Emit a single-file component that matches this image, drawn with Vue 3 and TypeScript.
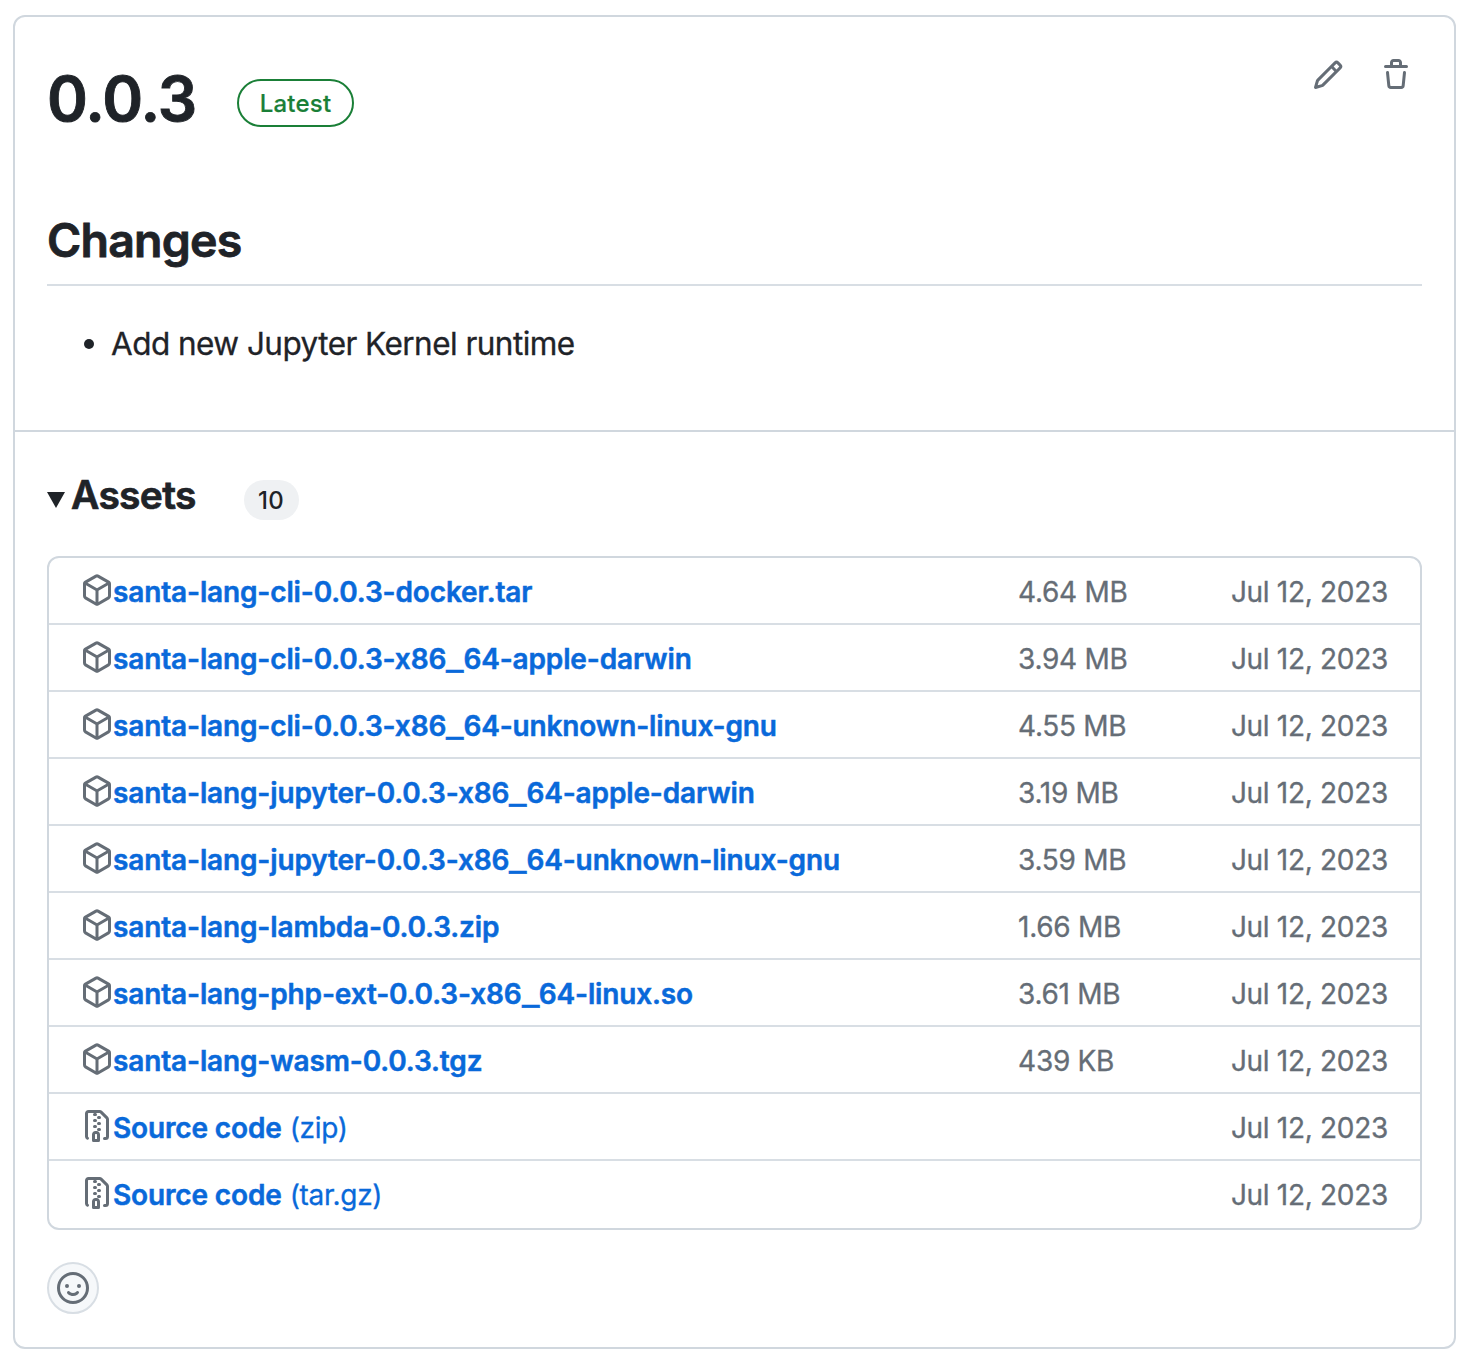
<script setup lang="ts">
interface Asset {
  name: string
  suffix?: string
  size?: string
  kind: 'package' | 'zip'
}

const releaseDate = 'Jul 12, 2023'

const assets: Asset[] = [
  { name: 'santa-lang-cli-0.0.3-docker.tar', size: '4.64 MB', kind: 'package' },
  { name: 'santa-lang-cli-0.0.3-x86_64-apple-darwin', size: '3.94 MB', kind: 'package' },
  { name: 'santa-lang-cli-0.0.3-x86_64-unknown-linux-gnu', size: '4.55 MB', kind: 'package' },
  { name: 'santa-lang-jupyter-0.0.3-x86_64-apple-darwin', size: '3.19 MB', kind: 'package' },
  { name: 'santa-lang-jupyter-0.0.3-x86_64-unknown-linux-gnu', size: '3.59 MB', kind: 'package' },
  { name: 'santa-lang-lambda-0.0.3.zip', size: '1.66 MB', kind: 'package' },
  { name: 'santa-lang-php-ext-0.0.3-x86_64-linux.so', size: '3.61 MB', kind: 'package' },
  { name: 'santa-lang-wasm-0.0.3.tgz', size: '439 KB', kind: 'package' },
  { name: 'Source code', suffix: '(zip)', kind: 'zip' },
  { name: 'Source code', suffix: '(tar.gz)', kind: 'zip' },
]

// Underscores are rendered in their own element so they can be drawn wider.
const nameParts = (name: string): string[] => name.split(/(_)/)

const icons = {
  pencil:
    'M11.013 1.427a1.75 1.75 0 0 1 2.474 0l1.086 1.086a1.75 1.75 0 0 1 0 2.474l-8.61 8.61c-.21.21-.47.364-.756.445l-3.251.93a.75.75 0 0 1-.927-.928l.929-3.25c.081-.286.235-.547.445-.758l8.61-8.61Zm.176 4.823L9.75 4.81l-6.286 6.287a.253.253 0 0 0-.064.108l-.558 1.953 1.953-.558a.253.253 0 0 0 .108-.064Zm1.238-3.763a.25.25 0 0 0-.354 0L10.811 3.75l1.439 1.44 1.263-1.263a.25.25 0 0 0 0-.354Z',
  trash:
    'M11 1.75V3h2.25a.75.75 0 0 1 0 1.5H2.75a.75.75 0 0 1 0-1.5H5V1.75C5 .784 5.784 0 6.75 0h2.5C10.216 0 11 .784 11 1.75ZM4.496 6.675l.66 6.6a.25.25 0 0 0 .249.225h5.19a.25.25 0 0 0 .249-.225l.66-6.6a.75.75 0 0 1 1.492.149l-.66 6.6A1.748 1.748 0 0 1 10.595 15h-5.19a1.75 1.75 0 0 1-1.741-1.575l-.66-6.6a.75.75 0 1 1 1.492-.15ZM6.5 1.75V3h3V1.75a.25.25 0 0 0-.25-.25h-2.5a.25.25 0 0 0-.25.25Z',
  package:
    'm8.878.392 5.25 3.045c.54.314.872.89.872 1.514v6.098a1.75 1.75 0 0 1-.872 1.514l-5.25 3.045a1.75 1.75 0 0 1-1.756 0l-5.25-3.045A1.75 1.75 0 0 1 1 11.049V4.951c0-.624.332-1.201.872-1.514L7.122.392a1.75 1.75 0 0 1 1.756 0ZM7.875 1.69l-4.63 2.685L8 7.133l4.755-2.758-4.63-2.685a.248.248 0 0 0-.25 0ZM2.5 5.677v5.372c0 .09.047.171.125.216l4.625 2.683V8.432Zm6.25 8.271 4.625-2.683a.25.25 0 0 0 .125-.216V5.677L8.75 8.432Z',
  zip: 'M3.5 1.75v11.5c0 .09.048.173.126.217a.75.75 0 0 1-.752 1.298A1.748 1.748 0 0 1 2 13.25V1.75C2 .784 2.784 0 3.75 0h5.586c.464 0 .909.185 1.237.513l2.914 2.914c.329.328.513.773.513 1.237v8.586A1.75 1.75 0 0 1 12.25 15h-.5a.75.75 0 0 1 0-1.5h.5a.25.25 0 0 0 .25-.25V4.664a.25.25 0 0 0-.073-.177L9.513 1.573a.25.25 0 0 0-.177-.073H7.25a.75.75 0 0 1 0 1.5h-.5a.75.75 0 0 1 0-1.5h-3a.25.25 0 0 0-.25.25Zm3.75 8.75h.5c.966 0 1.75.784 1.75 1.75v3a.75.75 0 0 1-.75.75h-2.5a.75.75 0 0 1-.75-.75v-3c0-.966.784-1.75 1.75-1.75ZM6 5.25a.75.75 0 0 1 .75-.75h.5a.75.75 0 0 1 0 1.5h-.5A.75.75 0 0 1 6 5.25Zm.75 2.25h.5a.75.75 0 0 1 0 1.5h-.5a.75.75 0 0 1 0-1.5ZM8 6.75A.75.75 0 0 1 8.75 6h.5a.75.75 0 0 1 0 1.5h-.5A.75.75 0 0 1 8 6.75ZM8.75 3h.5a.75.75 0 0 1 0 1.5h-.5a.75.75 0 0 1 0-1.5ZM8 9.75A.75.75 0 0 1 8.75 9h.5a.75.75 0 0 1 0 1.5h-.5A.75.75 0 0 1 8 9.75Zm-1 2.5v2.25h1v-2.25a.25.25 0 0 0-.25-.25h-.5a.25.25 0 0 0-.25.25Z',
  smiley:
    'M8 0a8 8 0 1 1 0 16A8 8 0 0 1 8 0ZM1.5 8a6.5 6.5 0 1 0 13 0 6.5 6.5 0 0 0-13 0Zm3.82 1.636a.75.75 0 0 1 1.038.175l.007.009c.103.118.22.222.35.31.264.178.683.37 1.285.37.602 0 1.02-.192 1.285-.371.13-.088.247-.192.35-.31l.007-.008a.75.75 0 0 1 1.222.87c-.06.085-.126.165-.198.24-.16.166-.338.316-.53.445-.63.418-1.37.638-2.127.629-.946 0-1.652-.308-2.126-.63a3.331 3.331 0 0 1-.728-.675.75.75 0 0 1 .183-1.044ZM12 7a1 1 0 1 1-2 0 1 1 0 0 1 2 0ZM5 8a1 1 0 1 1 0-2 1 1 0 0 1 0 2Z',
}
</script>

<template>
  <main class="page">
    <article class="card">
      <section class="notes">
        <header class="head">
          <h1 class="title">0.0.3</h1>
          <span class="badge">Latest</span>
          <div class="actions">
            <svg class="icon" viewBox="0 0 16 16"><path :d="icons.pencil" /></svg>
            <svg class="icon" viewBox="0 0 16 16"><path :d="icons.trash" /></svg>
          </div>
        </header>
        <h2 class="changes">Changes</h2>
        <ul class="list">
          <li class="item"><span class="dot"></span><span class="item-text">Add new Jupyter Kernel runtime</span></li>
        </ul>
      </section>

      <section class="assets">
        <div class="summary">
          <span class="caret"></span>
          <h3 class="assets-title">Assets</h3>
          <span class="counter">10</span>
        </div>
        <ul class="table">
          <li v-for="(asset, i) in assets" :key="i" class="row">
            <svg class="icon" viewBox="0 0 16 16"><path :d="icons[asset.kind]" /></svg>
            <a class="link">
              <span class="name"><span v-for="(part, j) in nameParts(asset.name)" :key="j" :class="{ underscore: part === '_' }">{{ part }}</span></span>
              <span v-if="asset.suffix" class="suffix">{{ asset.suffix }}</span>
            </a>
            <span class="size">{{ asset.size }}</span>
            <span class="date">{{ releaseDate }}</span>
          </li>
        </ul>
        <button class="react" type="button" aria-label="Add reaction">
          <svg class="icon" viewBox="0 0 16 16"><path :d="icons.smiley" /></svg>
        </button>
      </section>
    </article>
  </main>
</template>

<style>
body {
  background: #ffffff;
}
</style>

<style scoped>
.page {
  box-sizing: border-box;
  width: 1470px;
  height: 1360px;
  padding: 15px 14px 11px 13px;
  background: #ffffff;
  color: #1f2328;
  font-family: Inter, 'Liberation Sans', sans-serif;
  white-space: nowrap;
  overflow: hidden;
}

.card {
  box-sizing: border-box;
  height: 1334px;
  border: 2px solid #d0d7de;
  border-radius: 12px;
}

.icon {
  display: block;
  flex: none;
  width: 32px;
  height: 32px;
  fill: #656d76;
}

.notes {
  box-sizing: border-box;
  height: 415px;
  padding: 32px 32px 0;
  border-bottom: 2px solid #d0d7de;
}

.head {
  display: flex;
  align-items: flex-start;
  height: 147px;
}

.title {
  width: 190px;
  margin: 2px 0 0;
  font-size: 62px;
  line-height: 96px;
  font-weight: 600;
  letter-spacing: -1px;
  -webkit-text-stroke: 0.9px;
}

.badge {
  box-sizing: border-box;
  width: 117px;
  height: 48px;
  margin-top: 30px;
  border: 2px solid #1a7f37;
  border-radius: 24px;
  color: #1a7f37;
  font-size: 24px;
  line-height: 45px;
  font-weight: 500;
  letter-spacing: 0.2px;
  text-align: center;
  -webkit-text-stroke: 0.2px;
}

.actions {
  display: flex;
  gap: 36px;
  margin: 10px 10px 0 auto;
}

.changes {
  box-sizing: border-box;
  height: 90px;
  margin: 0;
  padding-top: 14px;
  border-bottom: 2px solid #d8dee4;
  font-size: 46.5px;
  line-height: 60px;
  font-weight: 600;
  letter-spacing: -0.8px;
  -webkit-text-stroke: 0.8px;
}

.list,
.table {
  margin: 0;
  padding: 0;
  list-style: none;
}

.item {
  display: flex;
  align-items: center;
  height: 48px;
  margin-top: 33px;
  padding-left: 37px;
  font-size: 31.5px;
  line-height: 48px;
  letter-spacing: -0.54px;
  -webkit-text-stroke: 0.3px;
}

.dot {
  width: 10px;
  height: 10px;
  margin: 2px 17px 0 0;
  border-radius: 50%;
  background: #1f2328;
}

.item-text {
  padding-top: 1px;
}

.assets {
  padding: 32px 32px 0;
}

.summary {
  display: flex;
  height: 92px;
}

.caret {
  width: 18px;
  height: 16px;
  margin: 28px 6px 0 0;
  background: #1f2328;
  clip-path: polygon(0 0, 100% 0, 50% 100%);
}

.assets-title {
  width: 173px;
  margin: 0;
  font-size: 39px;
  line-height: 62px;
  font-weight: 600;
  letter-spacing: -0.7px;
  -webkit-text-stroke: 0.7px;
}

.counter {
  box-sizing: border-box;
  width: 55px;
  height: 40px;
  margin-top: 16px;
  padding-right: 1px;
  border-radius: 20px;
  background: #eff1f3;
  font-size: 24px;
  line-height: 41px;
  font-weight: 500;
  letter-spacing: 0.3px;
  text-align: center;
}

.table {
  box-sizing: border-box;
  height: 674px;
  border: 2px solid #d0d7de;
  border-radius: 12px;
}

.row {
  box-sizing: border-box;
  display: flex;
  height: 67px;
  padding: 16px 32px 0;
  border-top: 2px solid #d8dee4;
  color: #656d76;
  font-size: 28px;
  line-height: 37px;
  letter-spacing: -0.3px;
  -webkit-text-stroke: 0.3px;
}

.row:first-child {
  height: 65px;
  border-top: 0;
}

.link {
  display: flex;
  gap: 8px;
  width: 906px;
  color: #0969da;
}

.name {
  font-weight: 600;
  letter-spacing: -0.14px;
  -webkit-text-stroke: 0.5px;
}

.underscore {
  display: inline-block;
  margin-right: 4.2px;
  transform: translateY(0.5px) scaleX(1.33);
  transform-origin: left;
}

.size {
  width: 213px;
}

.react {
  display: flex;
  box-sizing: border-box;
  width: 52px;
  height: 52px;
  margin: 32px 0 0;
  padding: 8px;
  border: 2px solid #d8dee4;
  border-radius: 50%;
  background: #f6f8fa;
}
</style>
